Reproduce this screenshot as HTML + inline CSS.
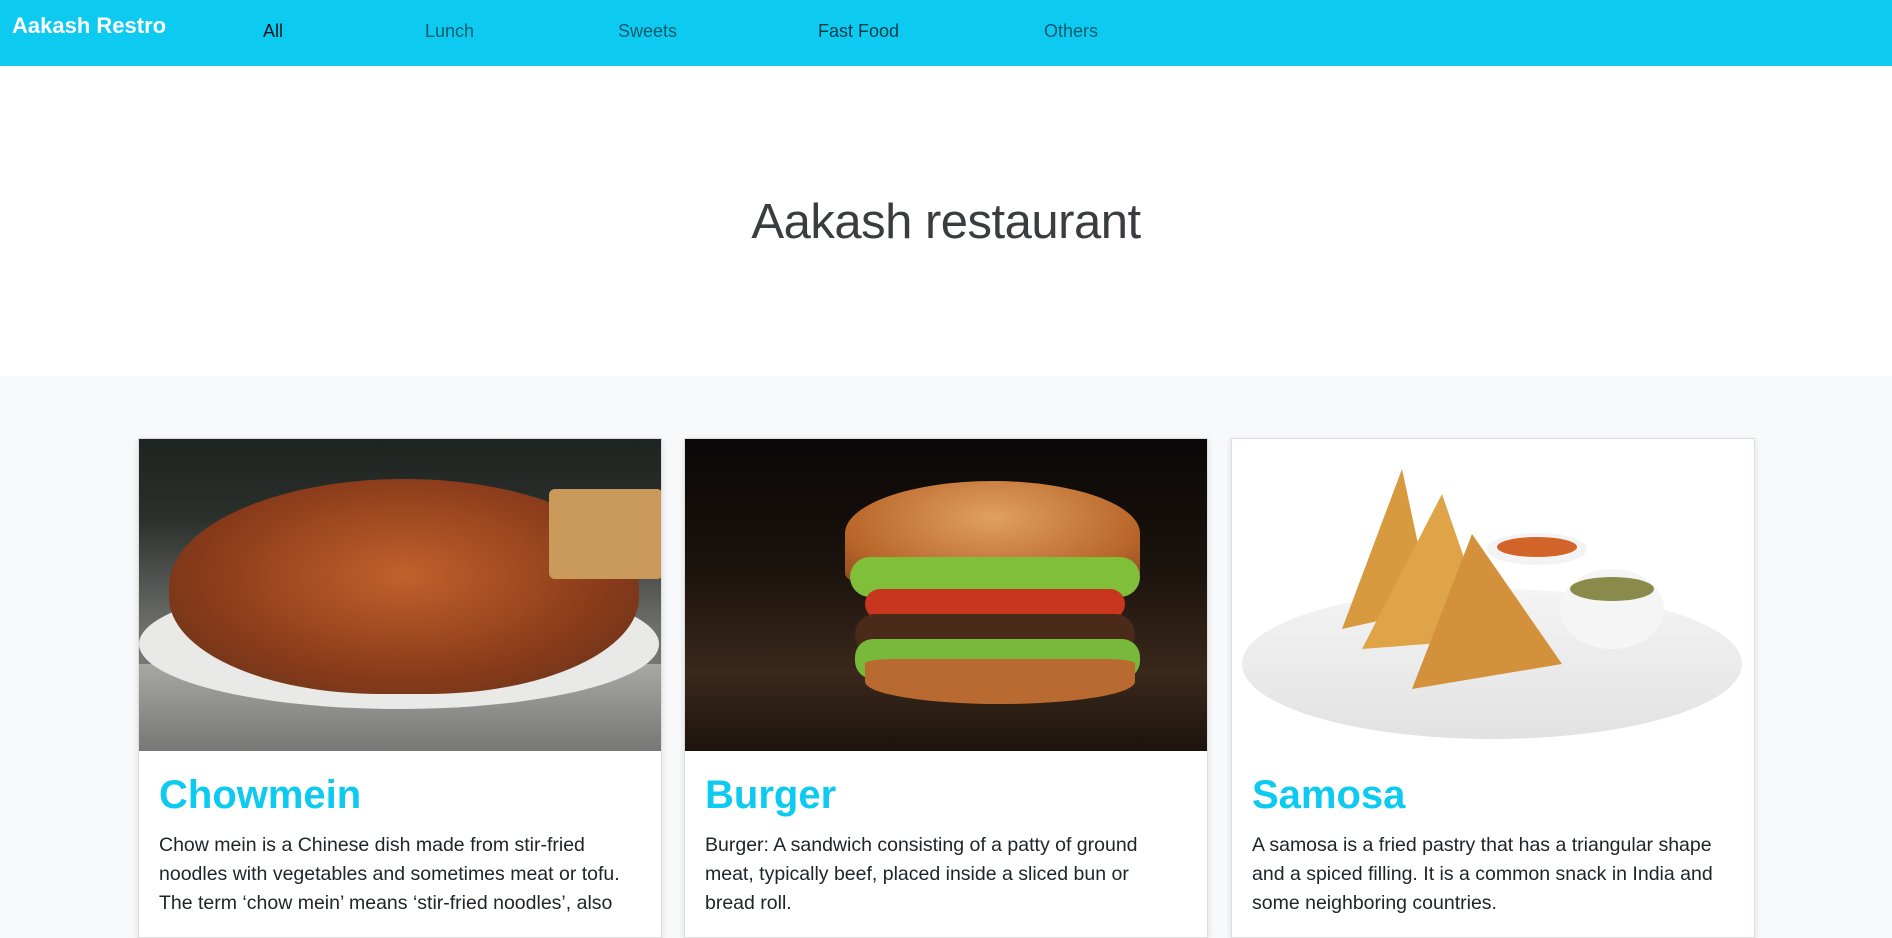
<!DOCTYPE html>
<html><head><meta charset="utf-8"><style>
*{box-sizing:border-box;margin:0;padding:0}
body{width:1892px;height:917px;overflow:hidden;font-family:"Liberation Sans",sans-serif;background:#f8f9fa;color:#212529}
nav{position:absolute;top:0;left:0;width:1892px;height:66px;background:#0dcaf0}
.brand{position:absolute;left:12px;top:13px;font-size:22px;font-weight:bold;color:#fff}
.nl{position:absolute;top:21px;font-size:18px;color:rgba(0,0,0,.55)}
.hero{position:absolute;top:66px;left:0;width:1892px;height:310px;background:#fff}
.hero h1{position:absolute;top:128px;width:100%;text-align:center;font-weight:normal;font-size:49px;color:#3a3d40;letter-spacing:-0.5px}
.card{position:absolute;top:438px;width:524px;height:500px;background:#fff;border:1px solid rgba(0,0,0,.13);box-shadow:0 2px 6px rgba(0,0,0,.12);overflow:hidden}
.img{height:312px;position:relative;overflow:hidden}
.card h2{position:absolute;left:20px;top:334px;font-size:40px;font-weight:bold;color:#0dcaf0}
.card p{position:absolute;left:20px;right:30px;top:392px;font-size:19.5px;line-height:29px}
</style></head><body>
<nav><div class="brand">Aakash Restro</div>
<div class="nl" style="left:263px;color:rgba(0,0,0,.9)">All</div>
<div class="nl" style="left:425px">Lunch</div>
<div class="nl" style="left:618px">Sweets</div>
<div class="nl" style="left:818px;color:rgba(0,0,0,.7)">Fast Food</div>
<div class="nl" style="left:1044px">Others</div></nav>
<div class="hero"><h1>Aakash restaurant</h1></div>

<div class="card" style="left:138px"><div class="img" style="background:linear-gradient(#1e2421 0,#2b2f2c 25%,#6d6e6a 60%,#8a8a86 100%)">
<div style="position:absolute;left:0;top:225px;width:524px;height:87px;background:linear-gradient(#a7a7a3,#777)"></div>
<div style="position:absolute;left:0;top:140px;width:520px;height:130px;border-radius:50%;background:#e9e9e7"></div>
<div style="position:absolute;left:30px;top:40px;width:470px;height:215px;border-radius:50% 50% 45% 45%;background:radial-gradient(ellipse at 50% 45%,#c0612c,#8a3b1a 60%,#5a3218)"></div>
<div style="position:absolute;left:410px;top:50px;width:114px;height:90px;background:#c99a5a;border-radius:6px"></div>
</div><h2>Chowmein</h2><p>Chow mein is a Chinese dish made from stir-fried noodles with vegetables and sometimes meat or tofu. The term ‘chow mein’ means ‘stir-fried noodles’, also</p></div>

<div class="card" style="left:684px"><div class="img" style="background:linear-gradient(#0a0807,#1a120d 40%,#3a281b 75%,#1c130c)">
<div style="position:absolute;left:160px;top:42px;width:295px;height:105px;border-radius:50% 50% 12% 12%;background:radial-gradient(ellipse at 50% 35%,#e0a060,#b9662a 70%,#8a4a1e)"></div>
<div style="position:absolute;left:165px;top:118px;width:290px;height:40px;border-radius:20px;background:#7fbf3a"></div>
<div style="position:absolute;left:180px;top:150px;width:260px;height:30px;border-radius:15px;background:#c8361f"></div>
<div style="position:absolute;left:170px;top:175px;width:280px;height:40px;border-radius:20px;background:#4a2a18"></div>
<div style="position:absolute;left:170px;top:200px;width:285px;height:40px;border-radius:18px;background:#78b83a"></div>
<div style="position:absolute;left:180px;top:220px;width:270px;height:45px;border-radius:10% 10% 50% 50%;background:#b86a30"></div>
</div><h2>Burger</h2><p>Burger: A sandwich consisting of a patty of ground meat, typically beef, placed inside a sliced bun or bread roll.</p></div>

<div class="card" style="left:1231px"><div class="img" style="background:#fff">
<div style="position:absolute;left:10px;top:150px;width:500px;height:150px;border-radius:50%;background:linear-gradient(#f4f4f4,#e2e2e2)"></div>
<svg width="524" height="312" style="position:absolute;left:0;top:0">
<polygon points="110,190 170,30 200,170" fill="#d89a3e"/>
<polygon points="130,210 210,55 260,200" fill="#e0a448"/>
<polygon points="180,250 240,95 330,225" fill="#d2913a"/>
<ellipse cx="305" cy="110" rx="50" ry="16" fill="#f3f3f3"/><ellipse cx="305" cy="108" rx="40" ry="10" fill="#d2642a"/>
<ellipse cx="380" cy="170" rx="52" ry="40" fill="#f5f5f5"/><ellipse cx="380" cy="150" rx="42" ry="12" fill="#8a8a4a"/>
</svg>
</div><h2>Samosa</h2><p>A samosa is a fried pastry that has a triangular shape and a spiced filling. It is a common snack in India and some neighboring countries.</p></div>
</body></html>
